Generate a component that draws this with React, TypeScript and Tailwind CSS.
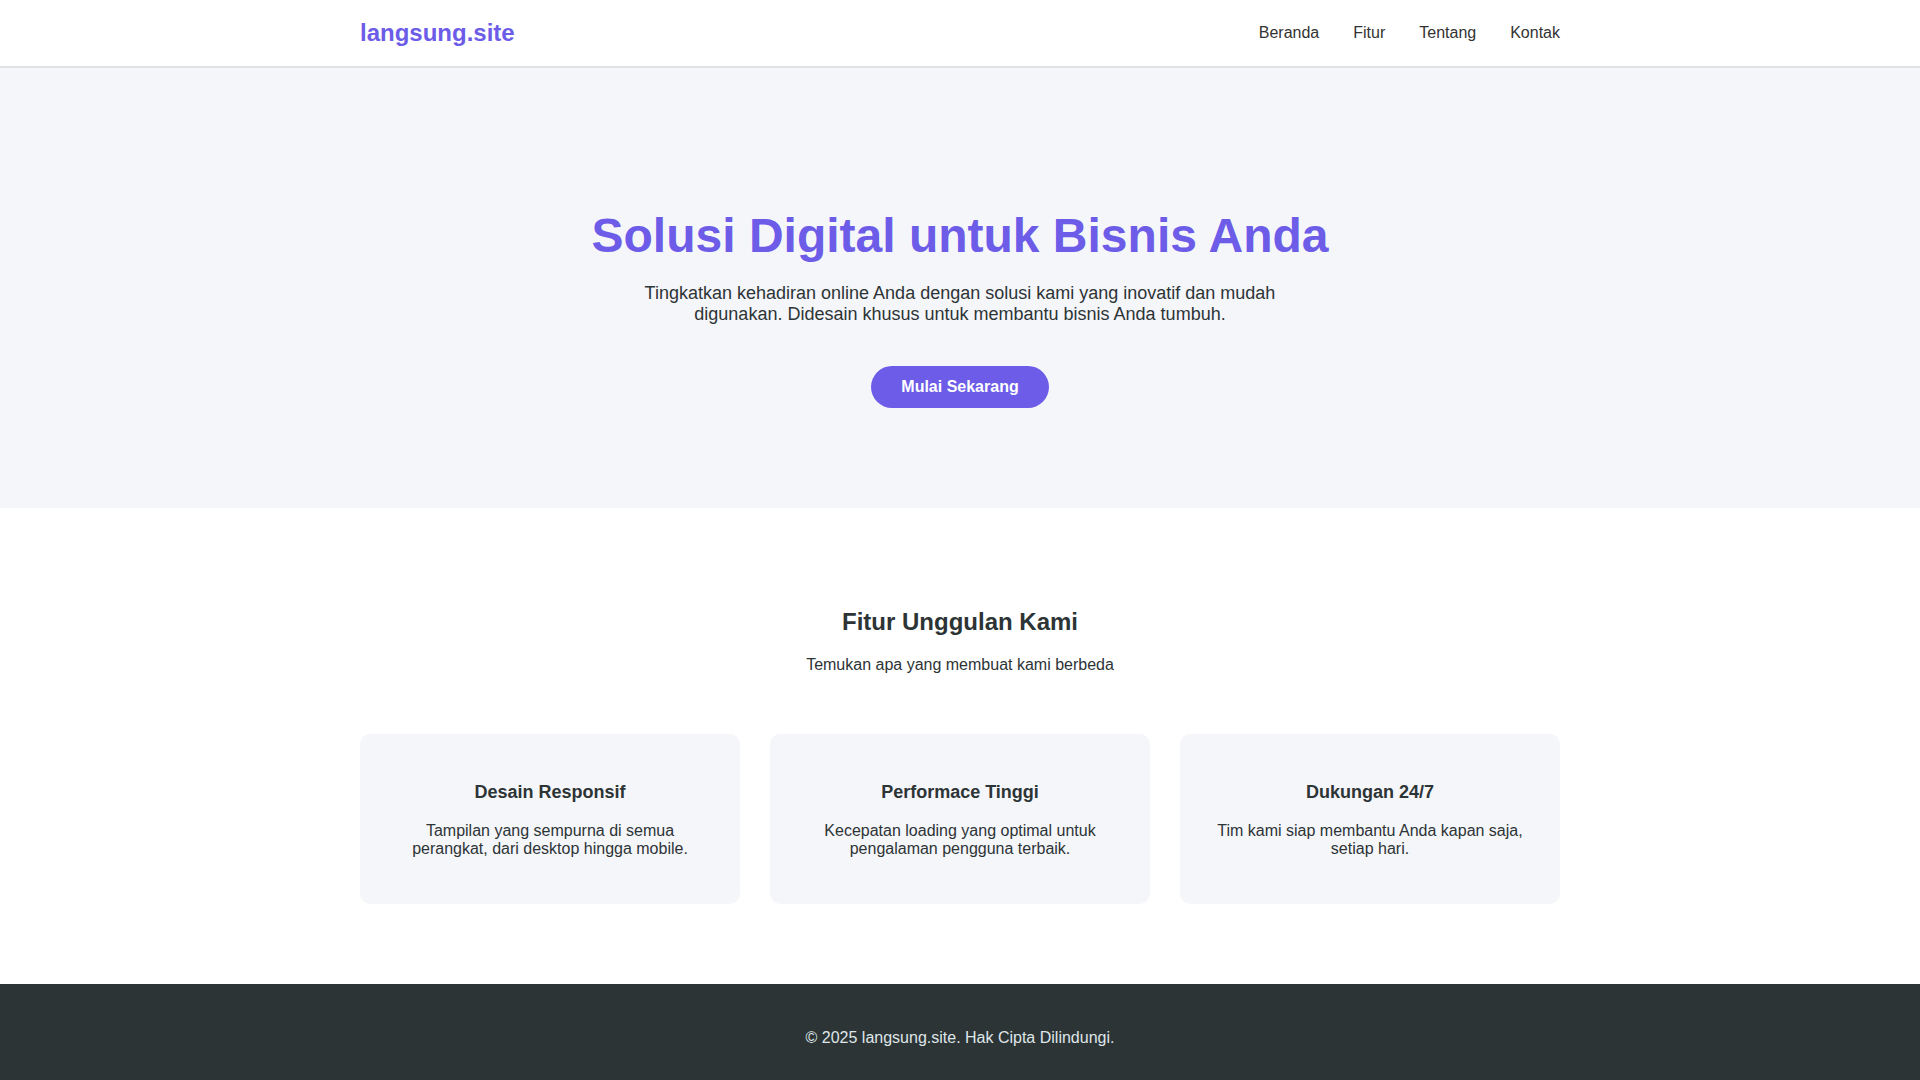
const NAV = ['Beranda', 'Fitur', 'Tentang', 'Kontak']

const FEATURES = [
  {
    title: 'Desain Responsif',
    desc: 'Tampilan yang sempurna di semua perangkat, dari desktop hingga mobile.',
  },
  {
    title: 'Performace Tinggi',
    desc: 'Kecepatan loading yang optimal untuk pengalaman pengguna terbaik.',
  },
  {
    title: 'Dukungan 24/7',
    desc: 'Tim kami siap membantu Anda kapan saja, setiap hari.',
  },
]

export default function App() {
  return (
    <div className="h-screen overflow-y-scroll bg-white font-['Liberation_Sans',Arial,sans-serif] leading-[1.15] text-[#2d3436]">
      {/* header */}
      <header className="border-b-2 border-[#e1e2e6] bg-white">
        <div className="mx-auto flex h-[66px] max-w-[1200px] items-center justify-between">
          <a href="#" className="text-[24px] font-bold text-[#6c5ce7]">
            langsung.site
          </a>
          <nav className="flex items-center gap-[34px]">
            {NAV.map((n) => (
              <a key={n} href="#" className="text-[16px] text-[#333]">
                {n}
              </a>
            ))}
          </nav>
        </div>
      </header>

      {/* hero */}
      <section className="bg-[#f5f6fa] pb-[100px] pt-[140px] text-center">
        <div className="mx-auto max-w-[1200px]">
          <h1 className="mb-5 text-[48px] font-bold text-[#6c5ce7]">Solusi Digital untuk Bisnis Anda</h1>
          <p className="mx-auto mb-[41px] max-w-[650px] text-[18px] text-[#2d3436]">
            Tingkatkan kehadiran online Anda dengan solusi kami yang inovatif dan mudah digunakan. Didesain khusus untuk membantu bisnis Anda tumbuh.
          </p>
          <a
            href="#"
            className="inline-block rounded-full bg-[#6c5ce7] px-[30px] py-3 text-[16px] font-bold text-white"
          >
            Mulai Sekarang
          </a>
        </div>
      </section>

      {/* fitur */}
      <section className="pb-[80px] pt-[100px]">
        <div className="mx-auto max-w-[1200px]">
          <div className="mb-[60px] text-center">
            <h2 className="mb-5 text-[24px] font-bold">Fitur Unggulan Kami</h2>
            <p className="text-[16px]">Temukan apa yang membuat kami berbeda</p>
          </div>
          <div className="grid grid-cols-3 gap-[30px]">
            {FEATURES.map((f) => (
              <div key={f.title} className="rounded-[10px] bg-[#f5f6fa] px-[30px] pb-[46px] pt-[48px] text-center">
                <h3 className="mb-[19px] text-[18px] font-bold">{f.title}</h3>
                <p className="text-[16px]">{f.desc}</p>
              </div>
            ))}
          </div>
        </div>
      </section>

      {/* footer */}
      <footer className="bg-[#2d3436] py-[45px] text-center text-[16px] text-[#dfe6e9]">
        © 2025 langsung.site. Hak Cipta Dilindungi.
      </footer>
    </div>
  )
}
